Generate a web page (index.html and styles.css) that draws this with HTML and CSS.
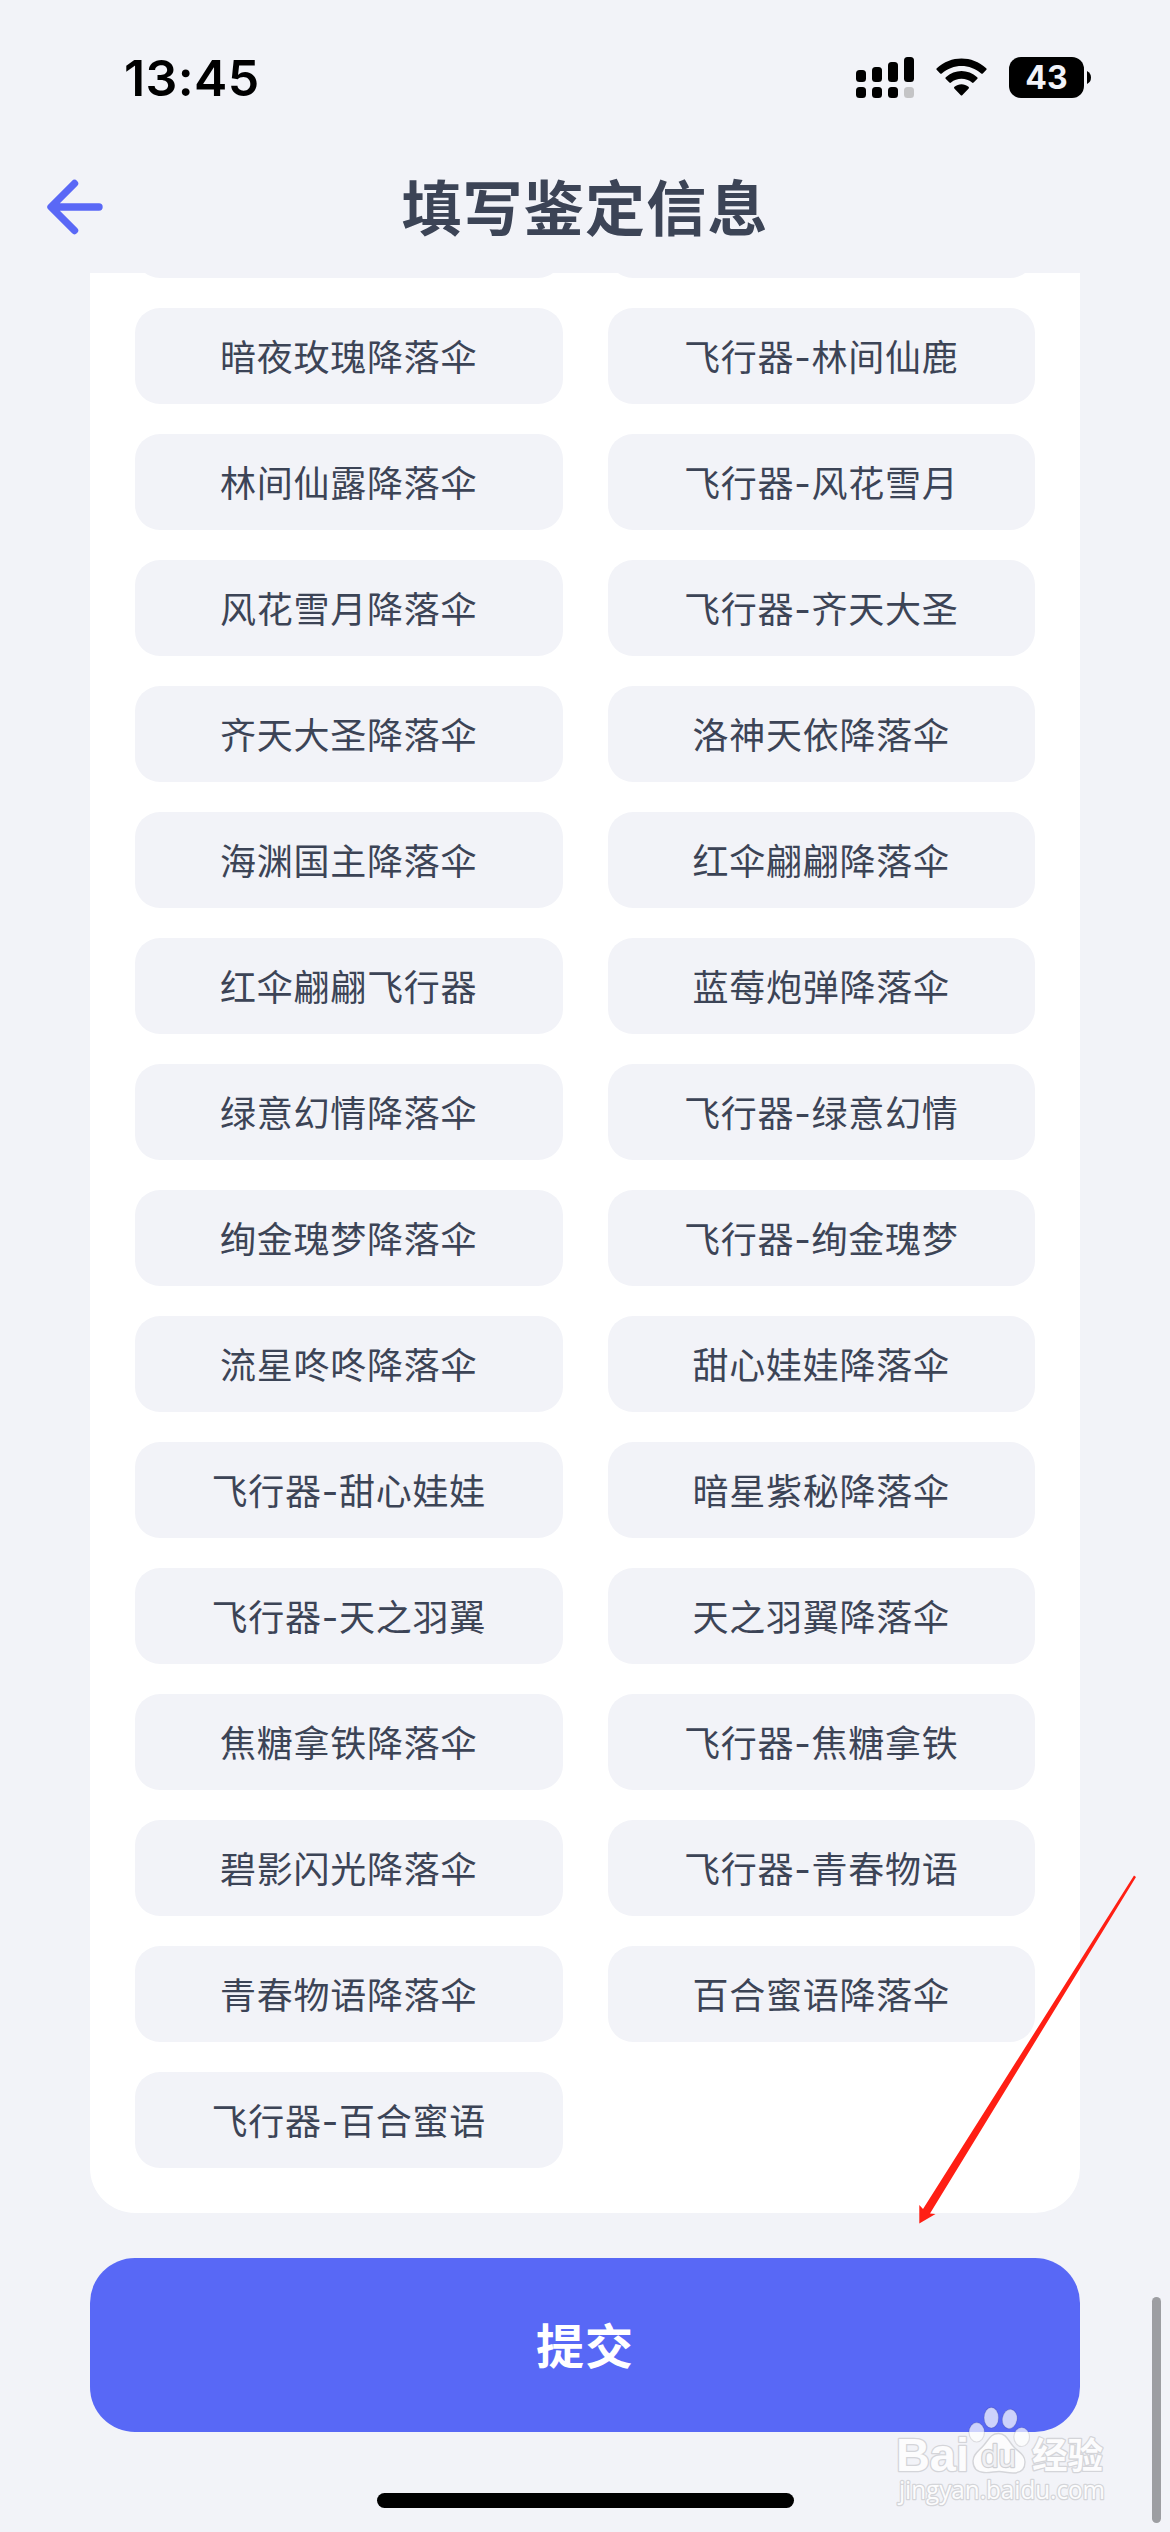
FILE: index.html
```html
<!DOCTYPE html>
<html lang="zh-CN">
<head>
<meta charset="UTF-8">
<meta name="viewport" content="width=device-width, initial-scale=1.0">
<title>填写鉴定信息</title>
<link rel="stylesheet" href="styles.css">
</head>
<body>

<div class="page">

<div class="status-bar">
  <span class="time">13:45</span>
  <div class="status-icons">
    <svg class="signal" width="58" height="41" viewBox="0 0 58 41">
      <rect x="0" y="13" width="10" height="12" rx="3.5"/>
      <rect x="16" y="10" width="10" height="15" rx="3.5"/>
      <rect x="32" y="5" width="10" height="20" rx="3.5"/>
      <rect x="48" y="0" width="10" height="25" rx="3.5"/>
      <rect x="0" y="30" width="10" height="11" rx="3.5"/>
      <rect x="16" y="30" width="10" height="11" rx="3.5"/>
      <rect x="32" y="30" width="10" height="11" rx="3.5"/>
      <rect x="48" y="30" width="10" height="11" rx="3.5" fill="#c4c4c6"/>
    </svg>
    <svg class="wifi" width="51" height="41" viewBox="0 0 51 41">
      <path d="M0.6 12.8 Q0 12 0.8 11.2 C15 -1.8 36 -1.8 50.2 11.2 Q51 12 50.4 12.8 L46.8 16.5 Q46 17.2 45.2 16.5 C34 6.5 17 6.5 5.8 16.5 Q5 17.2 4.2 16.5Z"/>
      <path d="M9.6 21.8 Q9 21 9.8 20.2 C19 12 32 12 41.2 20.2 Q42 21 41.4 21.8 L37.6 25.6 Q36.8 26.3 36 25.6 C30 20.6 21 20.6 15 25.6 Q14.2 26.3 13.4 25.6Z"/>
      <path d="M18.3 31.4 Q17.6 30.5 18.5 29.8 C22.5 26.4 28.5 26.4 32.5 29.8 Q33.4 30.5 32.7 31.4 L26.2 38.2 Q25.5 38.8 24.8 38.2Z"/>
    </svg>
    <div class="battery">
      <span class="battery-body">43</span>
      <svg width="4" height="13" viewBox="0 0 4 13"><path d="M0 0Q4 2 4 6.5Q4 11 0 13Z"/></svg>
    </div>
  </div>
</div>

<div class="nav-bar">
  <svg class="back" width="58" height="56" viewBox="0 0 58 56">
    <path d="M28.5 4.5 5 28 28.5 51.5M5.5 28H53" fill="none" stroke="#5a68f6" stroke-width="7.4" stroke-linecap="round" stroke-linejoin="round"/>
  </svg>
  <h1>填写鉴定信息</h1>
</div>

<div class="scroll-area">
  <div class="card">
    <div class="chip"></div>
    <div class="chip"></div>
    <div class="chip">暗夜玫瑰降落伞</div>
    <div class="chip">飞行器-林间仙鹿</div>
    <div class="chip">林间仙露降落伞</div>
    <div class="chip">飞行器-风花雪月</div>
    <div class="chip">风花雪月降落伞</div>
    <div class="chip">飞行器-齐天大圣</div>
    <div class="chip">齐天大圣降落伞</div>
    <div class="chip">洛神天依降落伞</div>
    <div class="chip">海渊国主降落伞</div>
    <div class="chip">红伞翩翩降落伞</div>
    <div class="chip">红伞翩翩飞行器</div>
    <div class="chip">蓝莓炮弹降落伞</div>
    <div class="chip">绿意幻情降落伞</div>
    <div class="chip">飞行器-绿意幻情</div>
    <div class="chip">绚金瑰梦降落伞</div>
    <div class="chip">飞行器-绚金瑰梦</div>
    <div class="chip">流星咚咚降落伞</div>
    <div class="chip">甜心娃娃降落伞</div>
    <div class="chip">飞行器-甜心娃娃</div>
    <div class="chip">暗星紫秘降落伞</div>
    <div class="chip">飞行器-天之羽翼</div>
    <div class="chip">天之羽翼降落伞</div>
    <div class="chip">焦糖拿铁降落伞</div>
    <div class="chip">飞行器-焦糖拿铁</div>
    <div class="chip">碧影闪光降落伞</div>
    <div class="chip">飞行器-青春物语</div>
    <div class="chip">青春物语降落伞</div>
    <div class="chip">百合蜜语降落伞</div>
    <div class="chip">飞行器-百合蜜语</div>
  </div>
  <button class="btn-submit">提交</button>
</div>

<div class="scrollbar"></div>
<div class="home-indicator"></div>

<!-- red pointer to the submit button -->
<svg class="pointer" width="220" height="352" viewBox="0 0 220 352">
  <path d="M1.3 351.5 1.3 333 5 337 216 3.5 218 5 12 341.5 17.5 342Z" fill="#ff1f14"/>
</svg>

<!-- watermark -->
<svg class="watermark" width="260" height="120" viewBox="0 0 260 120">
  <g class="wm-paw">
    <ellipse cx="86.7" cy="29.3" rx="7.7" ry="9.7"/>
    <ellipse cx="101.3" cy="14.7" rx="7.2" ry="10.3"/>
    <ellipse cx="119.7" cy="16" rx="7.3" ry="9.7" transform="rotate(10 119.7 16)"/>
    <ellipse cx="131.7" cy="34" rx="7.8" ry="9.5"/>
  </g>
  <path class="wm-palm" d="M108.5 30.5C116 30.5 118 37 123 43C128 49 135 51 135 59C135 67 130 70 123 70C117 70 114 68.5 109 68.5C104 68.5 100 70 94 69.5C87 69 83 65 83 58C83 51 89 48 94 42C99 36 101 30.5 108.5 30.5Z"/>
  <text class="wm-bai" x="6" y="68" textLength="73" lengthAdjust="spacingAndGlyphs">Bai</text>
  <text class="wm-du" x="91" y="64" textLength="35" lengthAdjust="spacingAndGlyphs">du</text>
  <text class="wm-cn" x="142" y="66" textLength="71" lengthAdjust="spacingAndGlyphs">经验</text>
  <text class="wm-url" x="9" y="96" textLength="206" lengthAdjust="spacingAndGlyphs">jingyan.baidu.com</text>
</svg>

</div>

</body>
</html>
```
FILE: styles.css
```css
:root {
  --bg:#f2f3f8; --card:#fff; --accent:#5868f6; --text:#3c4456;
}
*{box-sizing:border-box}
body{margin:0;background:var(--bg);color:var(--text);font-family:"Noto Sans CJK SC",sans-serif}
.page{position:relative;width:1170px;height:2532px;display:flex;flex-direction:column;overflow:hidden}

.status-bar{flex:none;height:141px;padding:14px 79px 0 124px;display:flex;align-items:center;justify-content:space-between;color:#000}
.time{font:600 50px/60px Inter,sans-serif;letter-spacing:.4px}
.status-icons{display:flex;align-items:center}
.wifi{margin:0 22px}
.battery{display:flex;align-items:center;gap:3px}
.battery-body{width:75px;height:41px;border-radius:12px;background:#000;color:#f2f3f8;font:700 32px/42px Inter,sans-serif;text-align:center}

.nav-bar{flex:none;height:132px;display:flex;align-items:center;padding:0 46px}
.nav-bar h1{flex:1;margin:0 58px 4px 0;text-align:center;font-size:60px;line-height:80px;font-weight:700;letter-spacing:1.2px}

.scroll-area{flex:1;min-height:0;overflow:hidden;display:flex;flex-direction:column;justify-content:flex-end;padding:0 90px 100px}
.card{flex:none;display:grid;grid-template-columns:1fr 1fr;grid-auto-rows:96px;gap:30px 45px;padding:45px;border-radius:45px;background:var(--card);margin-bottom:45px}
/* Inter only supplies the wider hyphen */
.chip{display:flex;align-items:center;justify-content:center;padding-bottom:2px;border-radius:25px;background:var(--bg);font-family:Inter,"Noto Sans CJK SC",sans-serif;font-size:36px;letter-spacing:.75px}
.btn-submit{flex:none;height:174px;padding:0 0 4px;border:none;border-radius:45px;background:var(--accent);color:#fff;font-family:inherit;font-size:48px;font-weight:700;letter-spacing:1px}

.scrollbar{position:absolute;left:1152px;top:2297px;width:9px;height:226px;border-radius:5px;background:#9d9ea2}
.home-indicator{position:absolute;left:377px;top:2493px;width:417px;height:15px;border-radius:8px;background:#000}
.pointer{position:absolute;left:918px;top:1872px}
.watermark{position:absolute;left:890px;top:2403px}
.wm-paw{fill:#fff;fill-opacity:.7;stroke:#000;stroke-opacity:.1;stroke-width:1.2}
.wm-palm{fill:#fcfcfd;stroke:#d4d5d9;stroke-width:1.4}
.watermark text{fill:#fcfcfd;stroke:#d4d5d9;stroke-width:2.6;stroke-linejoin:round;paint-order:stroke}
.wm-bai{font:700 46px "Liberation Sans",sans-serif}
.watermark .wm-du{font:400 32px "Liberation Sans",sans-serif;fill:#f0f0f3;stroke:#cfd0d4;stroke-width:2.4}
.wm-cn{font:700 36px "Noto Sans CJK SC",sans-serif}
.wm-url{font:400 26px "Open Sans",sans-serif}
```
